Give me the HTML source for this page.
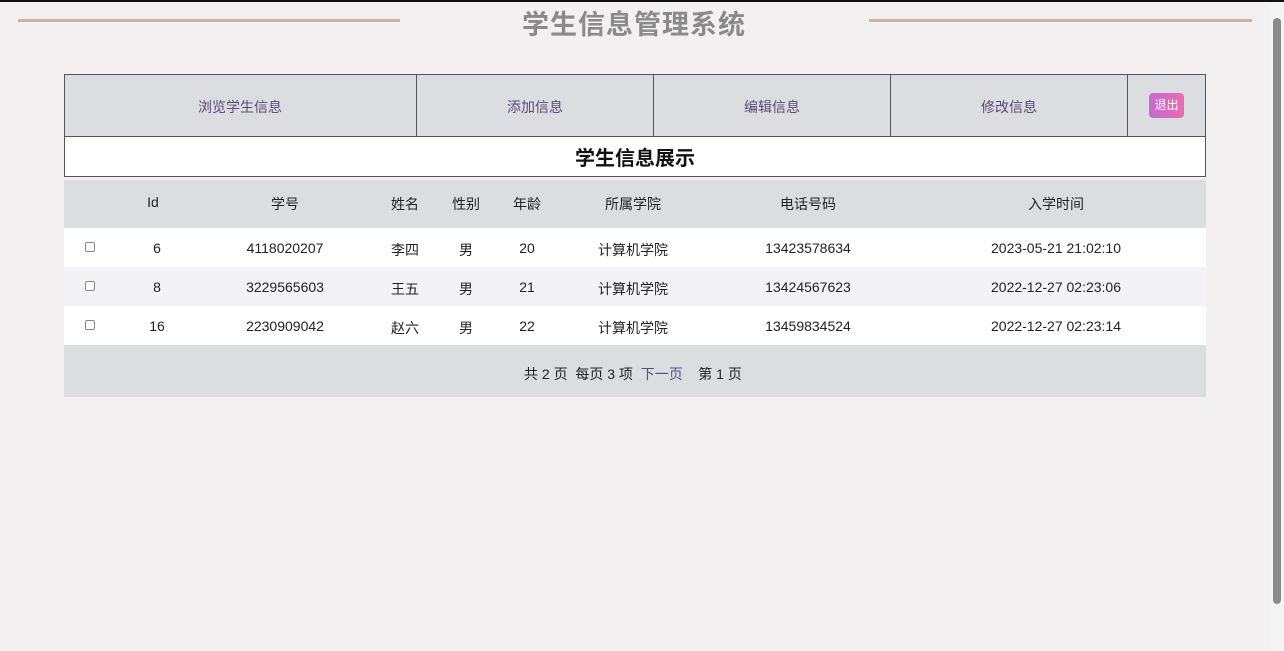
<!DOCTYPE html>
<html><head><meta charset="utf-8"><style>
*{margin:0;padding:0;box-sizing:border-box}
body{width:1284px;height:651px;background:#f2f0f0;font-family:"Liberation Sans","Noto Sans CJK SC",sans-serif;position:relative;overflow:hidden;color:#222}
.abs{position:absolute}
.c{position:absolute;transform:translateX(-50%);white-space:nowrap;font-size:14px}
.cb{position:absolute;width:10px;height:10px;border:1px solid #888;border-radius:2px;background:#fff;left:85px}
</style></head><body>
<div class="abs" style="left:0;top:0;width:1284px;height:2px;background:#111"></div>
<div class="abs" style="left:18px;top:19px;width:382px;height:3px;background:#c9b49c"></div>
<div class="abs" style="left:869px;top:19px;width:383px;height:3px;background:#c9b49c"></div>
<div class="abs" style="left:0;top:3px;width:1268px;text-align:center;font-size:27px;font-weight:bold;color:#8a8a8a;letter-spacing:1px">学生信息管理系统</div>
<div class="abs" style="left:1270px;top:2px;width:14px;height:649px;background:#f4f4f4"></div>
<div class="abs" style="left:1273px;top:18px;width:8px;height:586px;background:#8a8a8a;border-radius:4px"></div>

<div class="abs" style="left:64px;top:74px;width:1142px;height:103px;border:1px solid #555;background:#fff"></div>
<div class="abs" style="left:65px;top:75px;width:1140px;height:62px;background:#dcdde0;border-bottom:1px solid #555"></div>
<div class="abs" style="left:416px;top:75px;width:1px;height:62px;background:#555"></div>
<div class="abs" style="left:653px;top:75px;width:1px;height:62px;background:#555"></div>
<div class="abs" style="left:890px;top:75px;width:1px;height:62px;background:#555"></div>
<div class="abs" style="left:1127px;top:75px;width:1px;height:62px;background:#555"></div>
<div class="c" style="left:240px;top:97px;color:#5c4a78">浏览学生信息</div>
<div class="c" style="left:535px;top:97px;color:#5c4a78">添加信息</div>
<div class="c" style="left:772px;top:97px;color:#5c4a78">编辑信息</div>
<div class="c" style="left:1009px;top:97px;color:#5c4a78">修改信息</div>
<div class="abs" style="left:1149px;top:93px;width:35px;height:25px;border-radius:4px;background:linear-gradient(90deg,#c36bd0,#ec6bb0);color:#fff;font-size:12px;text-align:center;line-height:25px">退出</div>
<div class="c" style="left:635px;top:142px;font-size:20px;font-weight:bold;color:#111">学生信息展示</div>

<div class="abs" style="left:64px;top:180px;width:1142px;height:48px;background:#dcdddf"></div>
<div class="abs" style="left:64px;top:228px;width:1142px;height:39px;background:#fff"></div>
<div class="abs" style="left:64px;top:267px;width:1142px;height:39px;background:#f2f2f7"></div>
<div class="abs" style="left:64px;top:306px;width:1142px;height:39px;background:#fff"></div>
<div class="abs" style="left:64px;top:345px;width:1142px;height:52px;background:#dcdddf"></div>

<div class="c" style="left:153px;top:194px">Id</div>
<div class="c" style="left:285px;top:194px">学号</div>
<div class="c" style="left:405px;top:194px">姓名</div>
<div class="c" style="left:466px;top:194px">性别</div>
<div class="c" style="left:527px;top:194px">年龄</div>
<div class="c" style="left:633px;top:194px">所属学院</div>
<div class="c" style="left:808px;top:194px">电话号码</div>
<div class="c" style="left:1056px;top:194px">入学时间</div>

<div class="cb" style="top:242px"></div>
<div class="c" style="left:157px;top:240px">6</div>
<div class="c" style="left:285px;top:240px">4118020207</div>
<div class="c" style="left:405px;top:240px">李四</div>
<div class="c" style="left:466px;top:240px">男</div>
<div class="c" style="left:527px;top:240px">20</div>
<div class="c" style="left:633px;top:240px">计算机学院</div>
<div class="c" style="left:808px;top:240px">13423578634</div>
<div class="c" style="left:1056px;top:240px">2023-05-21 21:02:10</div>

<div class="cb" style="top:281px"></div>
<div class="c" style="left:157px;top:279px">8</div>
<div class="c" style="left:285px;top:279px">3229565603</div>
<div class="c" style="left:405px;top:279px">王五</div>
<div class="c" style="left:466px;top:279px">男</div>
<div class="c" style="left:527px;top:279px">21</div>
<div class="c" style="left:633px;top:279px">计算机学院</div>
<div class="c" style="left:808px;top:279px">13424567623</div>
<div class="c" style="left:1056px;top:279px">2022-12-27 02:23:06</div>

<div class="cb" style="top:320px"></div>
<div class="c" style="left:157px;top:318px">16</div>
<div class="c" style="left:285px;top:318px">2230909042</div>
<div class="c" style="left:405px;top:318px">赵六</div>
<div class="c" style="left:466px;top:318px">男</div>
<div class="c" style="left:527px;top:318px">22</div>
<div class="c" style="left:633px;top:318px">计算机学院</div>
<div class="c" style="left:808px;top:318px">13459834524</div>
<div class="c" style="left:1056px;top:318px">2022-12-27 02:23:14</div>

<div class="abs" style="left:524px;top:364px;font-size:14px;white-space:nowrap">共 2 页&nbsp; 每页 3 项&nbsp; <span style="color:#5c4a88">下一页</span>&nbsp;&nbsp;&nbsp; 第 1 页</div>
</body></html>
